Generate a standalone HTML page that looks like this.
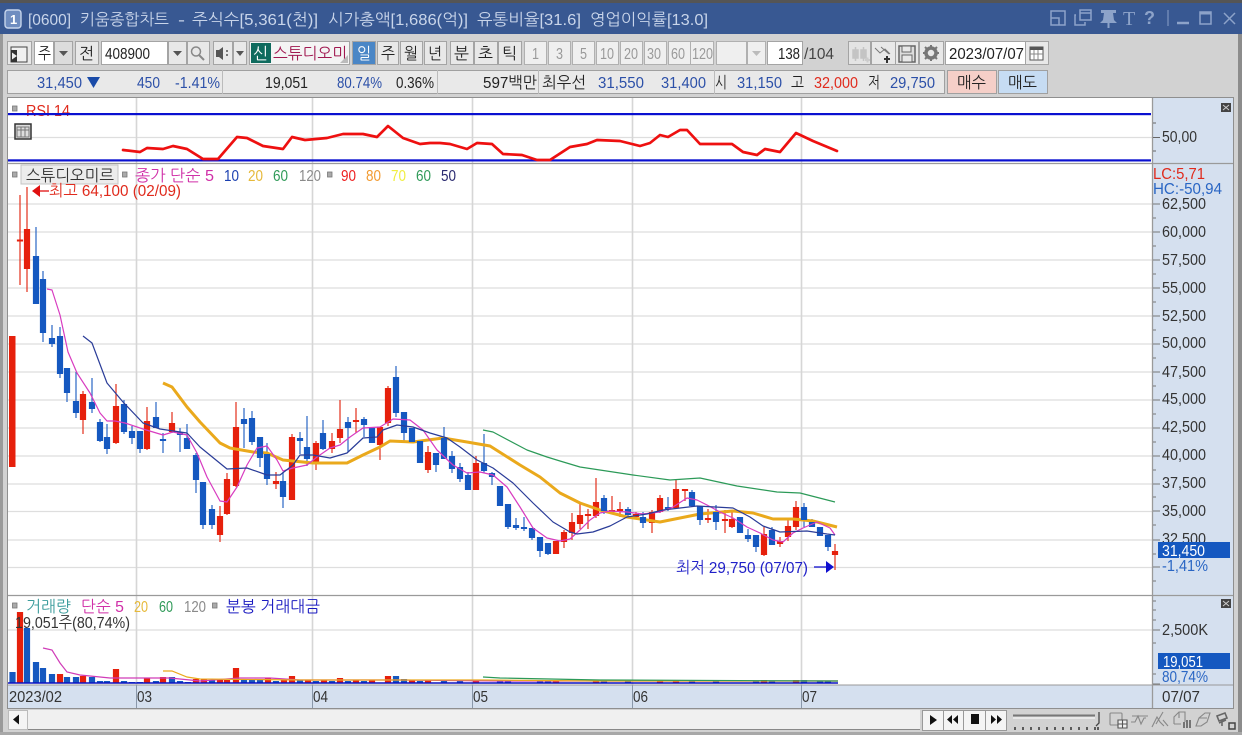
<!DOCTYPE html>
<html lang="ko"><head><meta charset="utf-8"><title>키움종합차트</title>
<style>
html,body{margin:0;padding:0;background:#d2d2d2}
svg{display:block;filter:blur(.35px)}
text{font-family:"Liberation Sans","NanumGothic","Noto Sans CJK KR",sans-serif;font-size:16px;fill:#222}
.ti{fill:#c9d5ea;font-size:16px}
.b{fill:#2c50a8}.r{fill:#e02a1c}.m{fill:#d030a8}
.ax{fill:#333;font-size:16px}
</style></head><body>
<svg width="1242" height="735" viewBox="0 0 1242 735" xmlns="http://www.w3.org/2000/svg">
<rect width="1242" height="735" fill="#d2d2d2"/>
<rect width="1242" height="3" fill="#555"/>
<rect x="0" y="3" width="3" height="732" fill="#9a9a9a"/>
<rect x="1238" y="3" width="4" height="732" fill="#8c8c8c"/>
<rect y="732" width="1242" height="3" fill="#a8a8a8"/>
<rect y="3" width="1242" height="31" fill="#385892"/>
<rect x="5" y="10" width="16" height="18" rx="3" fill="#6f8dc0" stroke="#c7d5ec" stroke-width="1.4"/>
<text x="10" y="24" style="font-size:13px;font-weight:bold;fill:#fff">1</text>
<g>
<text class="ti" x="28" y="25" textLength="43" lengthAdjust="spacingAndGlyphs">[0600]</text>
<text class="ti" x="80" y="25" textLength="89" lengthAdjust="spacingAndGlyphs">키움종합차트</text>
<text class="ti" x="178" y="25" textLength="7" lengthAdjust="spacingAndGlyphs">-</text>
<text class="ti" x="192" y="25" textLength="126" lengthAdjust="spacingAndGlyphs">주식수[5,361(천)]</text>
<text class="ti" x="328" y="25" textLength="140" lengthAdjust="spacingAndGlyphs">시가총액[1,686(억)]</text>
<text class="ti" x="477" y="25" textLength="104" lengthAdjust="spacingAndGlyphs">유통비율[31.6]</text>
<text class="ti" x="590" y="25" textLength="118" lengthAdjust="spacingAndGlyphs">영업이익률[13.0]</text>
</g>
<!-- title icons -->
<g fill="none" stroke="#8da3c9" stroke-width="1.5">
<path d="M1051 11h14v14h-14zM1051 18h8v7"/>
<path d="M1080 10h11v10h-11zM1080 13h11M1076 15h-1v10h10v-3"/>
<path d="M1108.500 22v6" stroke-width="2"/>
<path d="M1101 10h15v3h-3l1 7 3 3h-17l3-3 1-7h-3z" fill="#8da3c9" stroke="none"/>
<path d="M1168 10v16" stroke="#6f88b6"/>
<path d="M1177 23h12" stroke-width="2.500"/>
<path d="M1200 12h11v12h-11z"/><path d="M1200 13h11" stroke-width="3"/>
<path d="M1224 13l11 11M1235 13l-11 11"/>
</g>
<text x="1123" y="25" style="font-family:'Liberation Serif',serif;font-size:20px;fill:#8da3c9">T</text>
<text x="1144" y="24" style="font-size:18px;font-weight:bold;fill:#8da3c9">?</text>

<!-- toolbar 1 -->
<g fill="#e8e8e8" stroke="#a4a4a4">
<rect x="7.500" y="41.500" width="24" height="23"/>
<rect x="34.500" y="41.500" width="19" height="23" fill="#fff"/>
<rect x="54.500" y="41.500" width="18" height="23" fill="#dcdcdc"/>
<rect x="75.500" y="41.500" width="23" height="23"/>
<rect x="101.500" y="41.500" width="66" height="23" fill="#fff"/>
<rect x="168.500" y="41.500" width="18" height="23"/>
<rect x="187.500" y="41.500" width="22" height="23"/>
<rect x="213.500" y="41.500" width="19" height="23"/>
<rect x="233.500" y="41.500" width="13" height="23"/>
<rect x="249.500" y="41.500" width="100" height="23" fill="#f4f4f4"/>
<rect x="352.500" y="41.500" width="23" height="23" fill="#4a86c6"/>
<rect x="377.500" y="41.500" width="21" height="23"/>
<rect x="400.500" y="41.500" width="22" height="23"/>
<rect x="424.500" y="41.500" width="22" height="23"/>
<rect x="450.500" y="41.500" width="23" height="23"/>
<rect x="474.500" y="41.500" width="23" height="23"/>
<rect x="498.500" y="41.500" width="23" height="23"/>
<g fill="#efefef" stroke="#b0b0b0">
<rect x="524.500" y="41.500" width="22" height="23"/>
<rect x="548.500" y="41.500" width="22" height="23"/>
<rect x="572.500" y="41.500" width="22" height="23"/>
<rect x="596.500" y="41.500" width="22" height="23"/>
<rect x="620.500" y="41.500" width="22" height="23"/>
<rect x="644.500" y="41.500" width="22" height="23"/>
<rect x="668.500" y="41.500" width="22" height="23"/>
<rect x="690.500" y="41.500" width="23" height="23"/>
<rect x="716.500" y="41.500" width="30" height="23"/>
<rect x="747.500" y="41.500" width="18" height="23"/>
</g>
<rect x="767.500" y="41.500" width="35" height="23" fill="#fff"/>
<rect x="848.500" y="41.500" width="22" height="23" fill="#e4e4e4"/>
<rect x="871.500" y="41.500" width="24" height="23"/>
<rect x="895.500" y="41.500" width="23" height="23"/>
<rect x="919.500" y="41.500" width="24" height="23"/>
<rect x="945.500" y="41.500" width="80" height="23" fill="#fff"/>
<rect x="1025.500" y="41.500" width="23" height="23"/>
</g>
<path d="M11 47h16v15h-16z" fill="#f0f0f0" stroke="#444"/><path d="M11 50h6v12h-6z" fill="#333"/><path d="M17 56l-5-3.500v7z" fill="#eee"/>
<path d="M59 51h9l-4.500 5zM173 51h9l-4.500 5zM236 51h8l-4 5z" fill="#555"/>
<path d="M752 51h9l-4.500 5z" fill="#bbb"/>
<circle cx="196" cy="51.500" r="4.500" fill="none" stroke="#888" stroke-width="1.5"/><path d="M199 55l5 5" stroke="#888" stroke-width="2"/>
<path d="M216 50h3l4-3v13l-4-3h-3z" fill="#555"/><path d="M226 50h2v2h-2zM226 54h2v2h-2z" fill="#777"/>
<rect x="251" y="43" width="20" height="20" fill="#0f6b5e"/>
<text x="253" y="59" style="fill:#fff" textLength="15" lengthAdjust="spacingAndGlyphs">신</text>
<text x="273" y="59" style="fill:#a01850" textLength="74" lengthAdjust="spacingAndGlyphs">스튜디오미</text>
<path d="M340 63h8v-8z" fill="#bbb"/>
<text x="38" y="59" textLength="13" lengthAdjust="spacingAndGlyphs">주</text>
<text x="79" y="59" textLength="15" lengthAdjust="spacingAndGlyphs">전</text>
<text x="105" y="59" textLength="45" lengthAdjust="spacingAndGlyphs">408900</text>
<text x="357" y="59" style="fill:#fff" textLength="14" lengthAdjust="spacingAndGlyphs">일</text>
<text x="381" y="59" textLength="14" lengthAdjust="spacingAndGlyphs">주</text>
<text x="404" y="59" textLength="14" lengthAdjust="spacingAndGlyphs">월</text>
<text x="428" y="59" textLength="14" lengthAdjust="spacingAndGlyphs">년</text>
<text x="454" y="59" textLength="15" lengthAdjust="spacingAndGlyphs">분</text>
<text x="478" y="59" textLength="15" lengthAdjust="spacingAndGlyphs">초</text>
<text x="502" y="59" textLength="15" lengthAdjust="spacingAndGlyphs">틱</text>
<text x="532" y="59" style="fill:#999" textLength="7" lengthAdjust="spacingAndGlyphs">1</text>
<text x="556" y="59" style="fill:#999" textLength="7" lengthAdjust="spacingAndGlyphs">3</text>
<text x="580" y="59" style="fill:#999" textLength="7" lengthAdjust="spacingAndGlyphs">5</text>
<text x="600" y="59" style="fill:#999" textLength="14" lengthAdjust="spacingAndGlyphs">10</text>
<text x="624" y="59" style="fill:#999" textLength="14" lengthAdjust="spacingAndGlyphs">20</text>
<text x="647" y="59" style="fill:#999" textLength="14" lengthAdjust="spacingAndGlyphs">30</text>
<text x="671" y="59" style="fill:#999" textLength="14" lengthAdjust="spacingAndGlyphs">60</text>
<text x="692" y="59" style="fill:#999" textLength="21" lengthAdjust="spacingAndGlyphs">120</text>
<text x="778" y="59" textLength="22" lengthAdjust="spacingAndGlyphs">138</text>
<text x="804" y="59" style="fill:#444" textLength="30" lengthAdjust="spacingAndGlyphs">/104</text>
<text x="949" y="59" textLength="75" lengthAdjust="spacingAndGlyphs">2023/07/07</text>
<!-- toolbar right icons -->
<path d="M853 50h5v8h-5zM861 50h5v8h-5zM855.500 47v14M863.500 47v14" stroke="#c4c4c4" stroke-width="1.500" fill="#c4c4c4"/><path d="M865 60h5M867.500 57.500v5" stroke="#ccc" stroke-width="2"/>
<path d="M875 48l5 5 5-4 5 5M881 47l8 7" fill="none" stroke="#777"/><path d="M884 59h6M887 56v7" stroke="#333" stroke-width="2"/>
<path d="M899 46h16v16h-16z" fill="#ddd" stroke="#666" stroke-width="1.500"/><path d="M902 46h9v6h-9zM902 55h10v7h-10z" fill="#e8e8e8" stroke="#666"/>
<circle cx="931" cy="53" r="5" fill="none" stroke="#777" stroke-width="3.500"/><path d="M931 45v3M931 58v3M923 53h3M936 53h3M925 47l2 2M935 57l2 2M937 47l-2 2M927 57l-2 2" stroke="#777" stroke-width="2"/>
<path d="M1030 47h13v13h-13z" fill="#fff" stroke="#555"/><path d="M1030 47h13v3h-13z" fill="#555"/><path d="M1034 50v10M1038 50v10M1030 54h13" stroke="#888"/>

<!-- row 2 -->
<rect x="7.500" y="70.500" width="937" height="23" fill="#e9e9e9" stroke="#a0a0a0"/>
<path d="M222.500 70v24M437.500 70v24M538.500 70v24M714.500 70v24" stroke="#bbb"/>
<rect x="947.500" y="70.500" width="49" height="23" fill="#f5cfc8" stroke="#a0a0a0"/>
<rect x="998.500" y="70.500" width="49" height="23" fill="#c6dcf3" stroke="#a0a0a0"/>
<text class="b" x="37" y="88" textLength="45" lengthAdjust="spacingAndGlyphs">31,450</text>
<path d="M87 77h13l-6.500 11z" fill="#1a4ba8"/>
<text class="b" x="137" y="88" textLength="23" lengthAdjust="spacingAndGlyphs">450</text>
<text class="b" x="175" y="88" textLength="45" lengthAdjust="spacingAndGlyphs">-1.41%</text>
<text x="265" y="88" textLength="43" lengthAdjust="spacingAndGlyphs">19,051</text>
<text class="b" x="337" y="88" textLength="45" lengthAdjust="spacingAndGlyphs">80.74%</text>
<text x="396" y="88" textLength="38" lengthAdjust="spacingAndGlyphs">0.36%</text>
<text x="483" y="88" textLength="54" lengthAdjust="spacingAndGlyphs">597백만</text>
<text x="542" y="88" textLength="44" lengthAdjust="spacingAndGlyphs">최우선</text>
<text class="b" x="598" y="88" textLength="46" lengthAdjust="spacingAndGlyphs">31,550</text>
<text class="b" x="661" y="88" textLength="45" lengthAdjust="spacingAndGlyphs">31,400</text>
<text x="715" y="88" textLength="12" lengthAdjust="spacingAndGlyphs">시</text>
<text class="b" x="737" y="88" textLength="45" lengthAdjust="spacingAndGlyphs">31,150</text>
<text x="791" y="88" textLength="13" lengthAdjust="spacingAndGlyphs">고</text>
<text class="r" x="814" y="88" textLength="44" lengthAdjust="spacingAndGlyphs">32,000</text>
<text x="868" y="88" textLength="12" lengthAdjust="spacingAndGlyphs">저</text>
<text class="b" x="890" y="88" textLength="45" lengthAdjust="spacingAndGlyphs">29,750</text>
<text x="957" y="88" textLength="29" lengthAdjust="spacingAndGlyphs">매수</text>
<text x="1008" y="88" textLength="29" lengthAdjust="spacingAndGlyphs">매도</text>

<!-- panes -->
<rect x="8" y="98" width="1144" height="587" fill="#fff"/>
<rect x="1152" y="98" width="81" height="587" fill="#d5e0ef"/>
<rect x="8" y="685" width="1225" height="23" fill="#d5e0ef"/>
<path d="M7.500 97.500H1233.500V708.500H7.500Z" fill="none" stroke="#8f8f8f"/>
<!-- grid -->
<g stroke="#dedede" stroke-width="1.300" fill="none">
<path d="M8 137.500H1152M8 204H1152M8 232H1152M8 260H1152M8 288H1152M8 316H1152M8 344H1152M8 372H1152M8 400H1152M8 428H1152M8 456H1152M8 484H1152M8 511.500H1152M8 540H1152M8 567.500H1152M8 630H1152"/>
<path d="M136.500 98V685M312.500 98V685M472.500 98V685M632.500 98V685M801.500 98V685" stroke="#d6d6d6" stroke-width="1.600"/>
</g>
<path d="M8 163.500H1233M8 595.500H1233M1152.500 98V708" stroke="#9a9a9a" stroke-width="1.300"/>
<path d="M8 685H1233" stroke="#999"/>
<path d="M136.500 685v23M312.500 685v23M472.500 685v23M632.500 685v23M801.500 685v23" stroke="#8a98aa"/>

<!-- RSI -->
<text class="r" x="26" y="116" textLength="44" lengthAdjust="spacingAndGlyphs">RSI 14</text>
<rect x="8" y="113" width="1143" height="2.200" fill="#0a10d0"/>
<rect x="8" y="159.300" width="1143" height="2.200" fill="#0a10d0"/>
<rect x="12.500" y="106" width="4.500" height="5" fill="#aaa" stroke="#777" stroke-width=".8"/>
<path d="M15 124h16v15h-16z" fill="#ddd" stroke="#333" stroke-width="1.500"/><path d="M17 127h12v10h-12zM21 127v10M25 127v10M17 130h12" fill="none" stroke="#777"/>
<path fill="none" stroke="#ee1010" stroke-width="2.700" stroke-linejoin="round" stroke-linecap="round" d="M123 150L140 152L147 148L163 149L173 146L187 149L203 159L218 159L237 137L247 138L263 146L283 149L292 137L305 140L327 138L343 134L363 134L377 137L388 126L403 138L420 144L430 143L440 143L450 144L467 149L477 143L492 144L503 154L522 155L537 160L550 160L570 147L587 144L597 140L620 141L640 146L650 143L660 135L668 137L680 130L687 130L700 144L732 144L743 152L757 155L765 149L780 152L796 133L813 141L837 151"/>
<text class="ax" x="1162" y="142" textLength="35" lengthAdjust="spacingAndGlyphs">50,00</text>
<path d="M1153 137.500h7M1153 123h3M1153 151h3" stroke="#666"/>
<rect x="1221" y="103" width="10" height="9" fill="#444"/><path d="M1223 105l6 5M1229 105l-6 5" stroke="#ccc"/>

<!-- legend main -->
<rect x="21" y="165" width="97" height="19" fill="#ececec" stroke="#c4c4c4"/>
<text x="26" y="181" style="fill:#333" textLength="88" lengthAdjust="spacingAndGlyphs">스튜디오미르</text>
<g fill="#aaa" stroke="#777" stroke-width=".8"><rect x="12.500" y="172" width="4.500" height="5"/><rect x="122.500" y="172" width="4.500" height="5"/><rect x="327.500" y="172" width="4.500" height="5"/></g>
<text class="m" x="135" y="181" textLength="79" lengthAdjust="spacingAndGlyphs">종가 단순 5</text>
<text x="224" y="181" style="fill:#1a3fb0" textLength="15" lengthAdjust="spacingAndGlyphs">10</text>
<text x="248" y="181" style="fill:#e6b93a" textLength="15" lengthAdjust="spacingAndGlyphs">20</text>
<text x="273" y="181" style="fill:#2f9a58" textLength="15" lengthAdjust="spacingAndGlyphs">60</text>
<text x="299" y="181" style="fill:#8a8a8a" textLength="22" lengthAdjust="spacingAndGlyphs">120</text>
<text x="341" y="181" style="fill:#ee2020" textLength="15" lengthAdjust="spacingAndGlyphs">90</text>
<text x="366" y="181" style="fill:#f29a30" textLength="15" lengthAdjust="spacingAndGlyphs">80</text>
<text x="391" y="181" style="fill:#f0ee40" textLength="15" lengthAdjust="spacingAndGlyphs">70</text>
<text x="416" y="181" style="fill:#2f9a58" textLength="15" lengthAdjust="spacingAndGlyphs">60</text>
<text x="441" y="181" style="fill:#2a2a70" textLength="15" lengthAdjust="spacingAndGlyphs">50</text>
<path d="M40 191H49" stroke="#e01010" stroke-width="1.300"/><path d="M32 191l8-6v12z" fill="#e01010"/>
<text class="r" x="49" y="196" textLength="132" lengthAdjust="spacingAndGlyphs">최고 64,100 (02/09)</text>

<!-- big left bar -->
<rect x="9" y="336" width="6.500" height="131" fill="#e6200c"/>

<!-- wicks -->
<path stroke="#e2301c" stroke-width="1.200" fill="none" d="M20 195V285M27 187V292M83 391V434M116 384V444M147 407V450M172 412V433M220 506V542M227 473V515M236 402V487M276 472V489M292 434V500M316 441V470M332 433V453M340 400V443M356 408V433M380 427V460M388 386V426M428 446V473M476 456V490M564 530V548M572 513V540M580 504V529M588 509V529M596 478V518M612 496V514M620 502V517M636 512V518M652 510V533M660 495V513M676 480V509M685 490V501M708 509V523M725 510V533M732 510V528M764 527V556M780 537V547M788 519V541M796 501V530M835 544V570"/>
<path stroke="#2a66c4" stroke-width="1.200" fill="none" d="M36 227V304M43 271V342M52 325V347M60 327V378M67 368V402M76 372V418M92 378V413M100 419V442M107 424V454M124 400V434M132 426V444M140 431V453M156 402V428M163 433V453M180 428V452M187 424V449M196 453V493M203 482V529M212 505V529M244 408V448M252 411V445M260 437V467M267 443V485M283 472V508M300 432V454M307 416V466M323 420V450M348 417V452M364 417V437M372 428V443M396 366V417M404 412V443M412 428V442M420 441V463M436 453V472M444 427V459M452 451V473M460 463V482M468 472V490M484 434V473M492 472V485M500 486V506M508 504V529M516 518V530M524 517V531M532 528V540M540 537V557M548 543V555M604 495V514M628 507V517M643 512V528M668 497V511M692 490V506M700 506V525M716 505V530M740 517V533M748 529V542M756 535V552M772 527V545M804 503V527M812 519V527M820 527V536M828 535V551"/>
<!-- moving averages (under bodies where the reference shows them hidden) -->
<path stroke="#e6200c" stroke-width="6.200" fill="none" d="M20 239.500V241.500M27 229V269M83 394V420M116 406V443M147 421V449M172 423V432M220 516V535M227 479V514M236 427V486M276 481V484M292 437V500M316 443V464M332 441V449M340 429V438M356 420V422M380 427V445M388 388V423M428 452V470M476 463V490M556 541V554M564 532V542M572 522V533M580 515V524M588 514V516M596 502V516M612 510V512M620 509V511M636 514V517M652 512V523M660 498V512M676 489V508M685 489V491M708 518V520M725 519V521M732 519V527M764 534V555M780 541V544M788 526V537M796 507V527M835 551V555"/>
<path fill="none" stroke="#eaa91c" stroke-width="3" stroke-linejoin="round" d="M163 383L172 387L187 407L200 422L220 443L230 448L253 452L267 453L283 460L313 463L347 463L363 455L380 447L390 441L413 442L443 438L467 442L490 446L520 465L540 477L560 493L580 503L600 510L627 517L660 522L680 518L700 514L733 511L753 513L773 519L793 519L813 521L837 527"/>
<path stroke="#1558c0" stroke-width="6.200" fill="none" d="M36 256V304M43 279V333M52 338V344M60 336V374M67 368V393M76 401V413M92 402V409M100 422V441M107 437V449M124 404V432M132 431V438M140 431V449M156 417V428M163 439V441M180 432V435M187 438V449M196 455V480M203 482V525M212 509V525M244 419V424M252 418V442M260 437V458M267 454V479M283 481V497M300 438V441M307 447V459M323 433V449M348 422V428M364 419V425M372 428V443M396 377V413M404 412V433M412 428V442M420 441V463M436 453V465M444 438V459M452 456V469M460 467V479M468 475V490M484 463V471M492 473V477M500 486V506M508 504V527M516 525V528M524 527V529M532 528V538M540 537V551M548 543V554M604 498V511M628 509V515M643 517V523M668 507V509M692 492V506M700 506V520M716 512V522M740 517V533M748 535V539M756 535V547M772 530V545M804 507V520M812 522V527M820 527V536M828 535V547"/>
<path fill="none" stroke="#d83cc0" stroke-width="1.200" stroke-linejoin="round" d="M47 289L52 290L60 315L68 352L77 373L90 393L100 413L107 421L115 421L125 423L143 429L163 435L173 432L187 435L197 453L207 477L220 501L227 502L237 487L247 465L257 448L267 446L277 460L283 471L293 468L307 465L317 457L330 448L340 445L350 437L363 428L380 427L393 419L410 420L423 430L437 450L453 465L467 473L480 472L493 475L507 487L520 507L533 528L547 538L560 541L570 539L580 530L590 520L600 513L610 511L627 512L643 514L660 512L673 507L687 498L697 500L707 505L720 512L733 518L747 527L760 533L773 540L783 542L793 533L803 528L817 522L830 528L835 535"/>
<path fill="none" stroke="#2a3c98" stroke-width="1.200" stroke-linejoin="round" d="M83 336L92 343L107 383L123 402L143 423L160 429L187 433L200 447L227 469L247 468L267 475L280 475L293 465L300 455L313 455L330 458L347 453L363 438L377 437L383 430L397 425L413 427L430 433L447 438L460 447L477 460L493 468L513 483L533 503L553 522L570 532L577 534L593 532L610 526L627 517L647 514L663 510L680 508L697 506L733 508L750 517L763 526L780 532L807 531L827 534L835 535"/>
<path fill="none" stroke="#2c9a58" stroke-width="1.200" stroke-linejoin="round" d="M483 430L493 432L527 450L547 457L560 461L580 467L633 475L670 480L700 478L737 486L777 492L800 493L835 502"/>

<!-- low label -->
<text x="676" y="573" style="fill:#2020c8" textLength="132" lengthAdjust="spacingAndGlyphs">최저 29,750 (07/07)</text>
<path d="M814 567H826" stroke="#1010d0" stroke-width="1.300"/><path d="M834 567l-8-6v12z" fill="#1010d0"/>

<!-- axis main -->
<text x="1153" y="179" style="fill:#e02a1c" textLength="52" lengthAdjust="spacingAndGlyphs">LC:5,71</text>
<text x="1153" y="194" style="fill:#2a66c4" textLength="69" lengthAdjust="spacingAndGlyphs">HC:-50,94</text>
<g>
<text class="ax" x="1162" y="209" textLength="44" lengthAdjust="spacingAndGlyphs">62,500</text>
<text class="ax" x="1162" y="237" textLength="44" lengthAdjust="spacingAndGlyphs">60,000</text>
<text class="ax" x="1162" y="265" textLength="44" lengthAdjust="spacingAndGlyphs">57,500</text>
<text class="ax" x="1162" y="293" textLength="44" lengthAdjust="spacingAndGlyphs">55,000</text>
<text class="ax" x="1162" y="321" textLength="44" lengthAdjust="spacingAndGlyphs">52,500</text>
<text class="ax" x="1162" y="348" textLength="44" lengthAdjust="spacingAndGlyphs">50,000</text>
<text class="ax" x="1162" y="377" textLength="44" lengthAdjust="spacingAndGlyphs">47,500</text>
<text class="ax" x="1162" y="404" textLength="44" lengthAdjust="spacingAndGlyphs">45,000</text>
<text class="ax" x="1162" y="432" textLength="44" lengthAdjust="spacingAndGlyphs">42,500</text>
<text class="ax" x="1162" y="460" textLength="44" lengthAdjust="spacingAndGlyphs">40,000</text>
<text class="ax" x="1162" y="488" textLength="44" lengthAdjust="spacingAndGlyphs">37,500</text>
<text class="ax" x="1162" y="516" textLength="44" lengthAdjust="spacingAndGlyphs">35,000</text>
<text class="ax" x="1162" y="544" textLength="44" lengthAdjust="spacingAndGlyphs">32,500</text>
</g>
<path stroke="#777" d="M1153 204h7M1153 232h7M1153 260h7M1153 288h7M1153 316h7M1153 344h7M1153 372h7M1153 400h7M1153 428h7M1153 456h7M1153 484h7M1153 511h7M1153 540h7M1153 567h7M1153 218h3M1153 246h3M1153 274h3M1153 302h3M1153 330h3M1153 358h3M1153 386h3M1153 414h3M1153 442h3M1153 470h3M1153 497h3M1153 525h3M1153 554h3M1153 581h3"/>
<rect x="1158" y="542" width="72" height="16" fill="#1558c0"/>
<text x="1162" y="556" style="fill:#fff" textLength="43" lengthAdjust="spacingAndGlyphs">31,450</text>
<text x="1162" y="571" style="fill:#2a66c4" textLength="46" lengthAdjust="spacingAndGlyphs">-1,41%</text>

<!-- volume pane -->
<rect x="12.500" y="603" width="4.500" height="5" fill="#aaa" stroke="#777" stroke-width=".8"/>
<rect x="212.500" y="603" width="4.500" height="5" fill="#aaa" stroke="#777" stroke-width=".8"/>
<path stroke="#e6200c" stroke-width="6.200" fill="none" d="M20 612V683M83 676V683M60 674V683M116 669V683M147 678V683M163 677V683M196 679V683M204 679V683M220 680V683M227 680V683M236 668V683M268 678V683M284 680V683M292 676V683M308 680V683M324 680V683M340 678V683M356 680V683M372 680V683M388 676V683M412 680V683M428 680V683M476 680V683M556 681V683M596 681V683M660 680V683M676 680V683M764 680V683M796 680V683"/>
<path stroke="#1558c0" stroke-width="6.200" fill="none" d="M12.500 672V683M27 628V683M36 662V683M43 668V683M52 674V683M67 677V683M76 677V683M92 677V683M100 681V683M107 681V683M124 681V683M132 682V683M140 682V683M156 681V683M172 677V683M180 681V683M188 682V683M212 680V683M244 679V683M252 679V683M260 680V683M276 681V683M300 680V683M316 681V683M332 681V683M348 681V683M364 681V683M396 676V683M404 679V683M420 681V683M444 680V683M460 681V683M500 680V683M508 680V683M540 681V683M548 681V683M604 681V683M628 681V683M692 681V683M716 681V683M756 681V683M772 681V683M804 680V683M820 681V683M828 681V683"/>
<path fill="none" stroke="#d03cb8" stroke-width="1.200" d="M43 648L52 650L60 663L67 672L80 675L110 678L140 678L170 678L200 681L240 678L270 678L300 680L400 680L500 681L838 681"/>
<path fill="none" stroke="#eaa91c" stroke-width="1.200" d="M163 671L172 671L187 677L200 679L300 680L480 680L600 681L838 681"/>
<path fill="none" stroke="#2c9a58" stroke-width="1.200" d="M483 677L500 678L600 680L838 681"/>
<path d="M8 683H838" stroke="#0a10c0" stroke-width="1.600"/>
<text x="26" y="612" style="fill:#3c9c9c" textLength="45" lengthAdjust="spacingAndGlyphs">거래량</text>
<text class="m" x="81" y="612" textLength="43" lengthAdjust="spacingAndGlyphs">단순 5</text>
<text x="134" y="612" style="fill:#e6b93a" textLength="14" lengthAdjust="spacingAndGlyphs">20</text>
<text x="159" y="612" style="fill:#2f9a58" textLength="14" lengthAdjust="spacingAndGlyphs">60</text>
<text x="184" y="612" style="fill:#8a8a8a" textLength="22" lengthAdjust="spacingAndGlyphs">120</text>
<text x="226" y="612" style="fill:#1a1ac0" textLength="94" lengthAdjust="spacingAndGlyphs">분봉 거래대금</text>
<text x="15" y="628" style="fill:#333" textLength="115" lengthAdjust="spacingAndGlyphs">19,051주(80,74%)</text>
<rect x="1221" y="599" width="10" height="9" fill="#444"/><path d="M1223 601l6 5M1229 601l-6 5" stroke="#ccc"/>
<text class="ax" x="1162" y="635" textLength="46" lengthAdjust="spacingAndGlyphs">2,500K</text>
<path stroke="#777" d="M1153 630h7M1153 601h3M1153 610h3M1153 620h3M1153 643h3M1153 674h3M1153 684h7"/>
<rect x="1158" y="653" width="72" height="16" fill="#1558c0"/>
<text x="1163" y="667" style="fill:#fff" textLength="40" lengthAdjust="spacingAndGlyphs">19,051</text>
<text x="1162" y="682" style="fill:#2a66c4" textLength="46" lengthAdjust="spacingAndGlyphs">80,74%</text>

<!-- date axis -->
<text class="ax" x="9" y="702" textLength="53" lengthAdjust="spacingAndGlyphs">2023/02</text>
<text class="ax" x="137" y="702" textLength="15" lengthAdjust="spacingAndGlyphs">03</text>
<text class="ax" x="313" y="702" textLength="15" lengthAdjust="spacingAndGlyphs">04</text>
<text class="ax" x="473" y="702" textLength="15" lengthAdjust="spacingAndGlyphs">05</text>
<text class="ax" x="633" y="702" textLength="15" lengthAdjust="spacingAndGlyphs">06</text>
<text class="ax" x="802" y="702" textLength="15" lengthAdjust="spacingAndGlyphs">07</text>
<text class="ax" x="1162" y="702" textLength="38" lengthAdjust="spacingAndGlyphs">07/07</text>

<!-- scrollbar -->
<rect x="8" y="710" width="912" height="19" fill="#f0f0f0"/>
<path d="M8 729.500H920" stroke="#888"/>
<rect x="8.500" y="710.500" width="19" height="19" fill="#f4f4f4" stroke="#bbb"/>
<path d="M13 719.500l6-5v10z" fill="#111"/>
<g fill="#f4f4f4" stroke="#999"><rect x="922.500" y="710.500" width="21" height="20"/><rect x="943.500" y="710.500" width="20" height="20"/><rect x="963.500" y="710.500" width="22" height="20"/><rect x="985.500" y="710.500" width="21" height="20"/></g>
<path d="M930 715l7 5-7 5zM958 715l-5 4.500 5 4.500zM952 715l-5 4.500 5 4.500zM971 714h8v10h-8zM991 715l5 4.500-5 4.500zM997 715l5 4.500-5 4.500z" fill="#111"/>
<path d="M1013 715.500H1095" stroke="#777" stroke-width="2"/><path d="M1013 718H1095" stroke="#fff"/>
<path d="M1099 712v11l-3 3" stroke="#444" stroke-width="1.300" fill="none"/>
<path d="M1015 727v3M1023 727v3M1031 727v3M1039 727v3M1047 727v3M1055 727v3M1063 727v3M1071 727v3M1079 727v3M1087 727v3M1095 727v3M1098 727v3" stroke="#333" stroke-width="1.500"/>
<!-- bottom-right icons -->
<g fill="none" stroke="#888" stroke-width="1.100">
<rect x="1110" y="713" width="12" height="12" rx="1"/><path d="M1118 720h9v8h-9zM1122.500 720v8M1118 724h9" stroke="#555" fill="#f0f0f0"/>
<path d="M1131 722h4l3-6 3 8 3-6h2M1132 716h16"/>
<path d="M1152 727l5-10 3 5 4 4M1156 724l7-12M1163 720l5 6"/>
<path d="M1174 724v-7l5-5h6v10M1174 724h7M1179 712v6"/><path d="M1184 722v6M1187 720v8M1190 720v8" stroke="#555" stroke-width="1.500"/>
<path d="M1196 726l3-8 6-5h5l-3 9-6 4zM1199 718h8"/>
<path d="M1217 716l8-3 2 5-8 3zM1219 723l7-3M1222 726v-6" stroke-width="1.600" stroke="#666"/><path d="M1229 723h6v6h-6z" stroke="#444" stroke-width="1.500"/>
</g>
</svg>
</body></html>
